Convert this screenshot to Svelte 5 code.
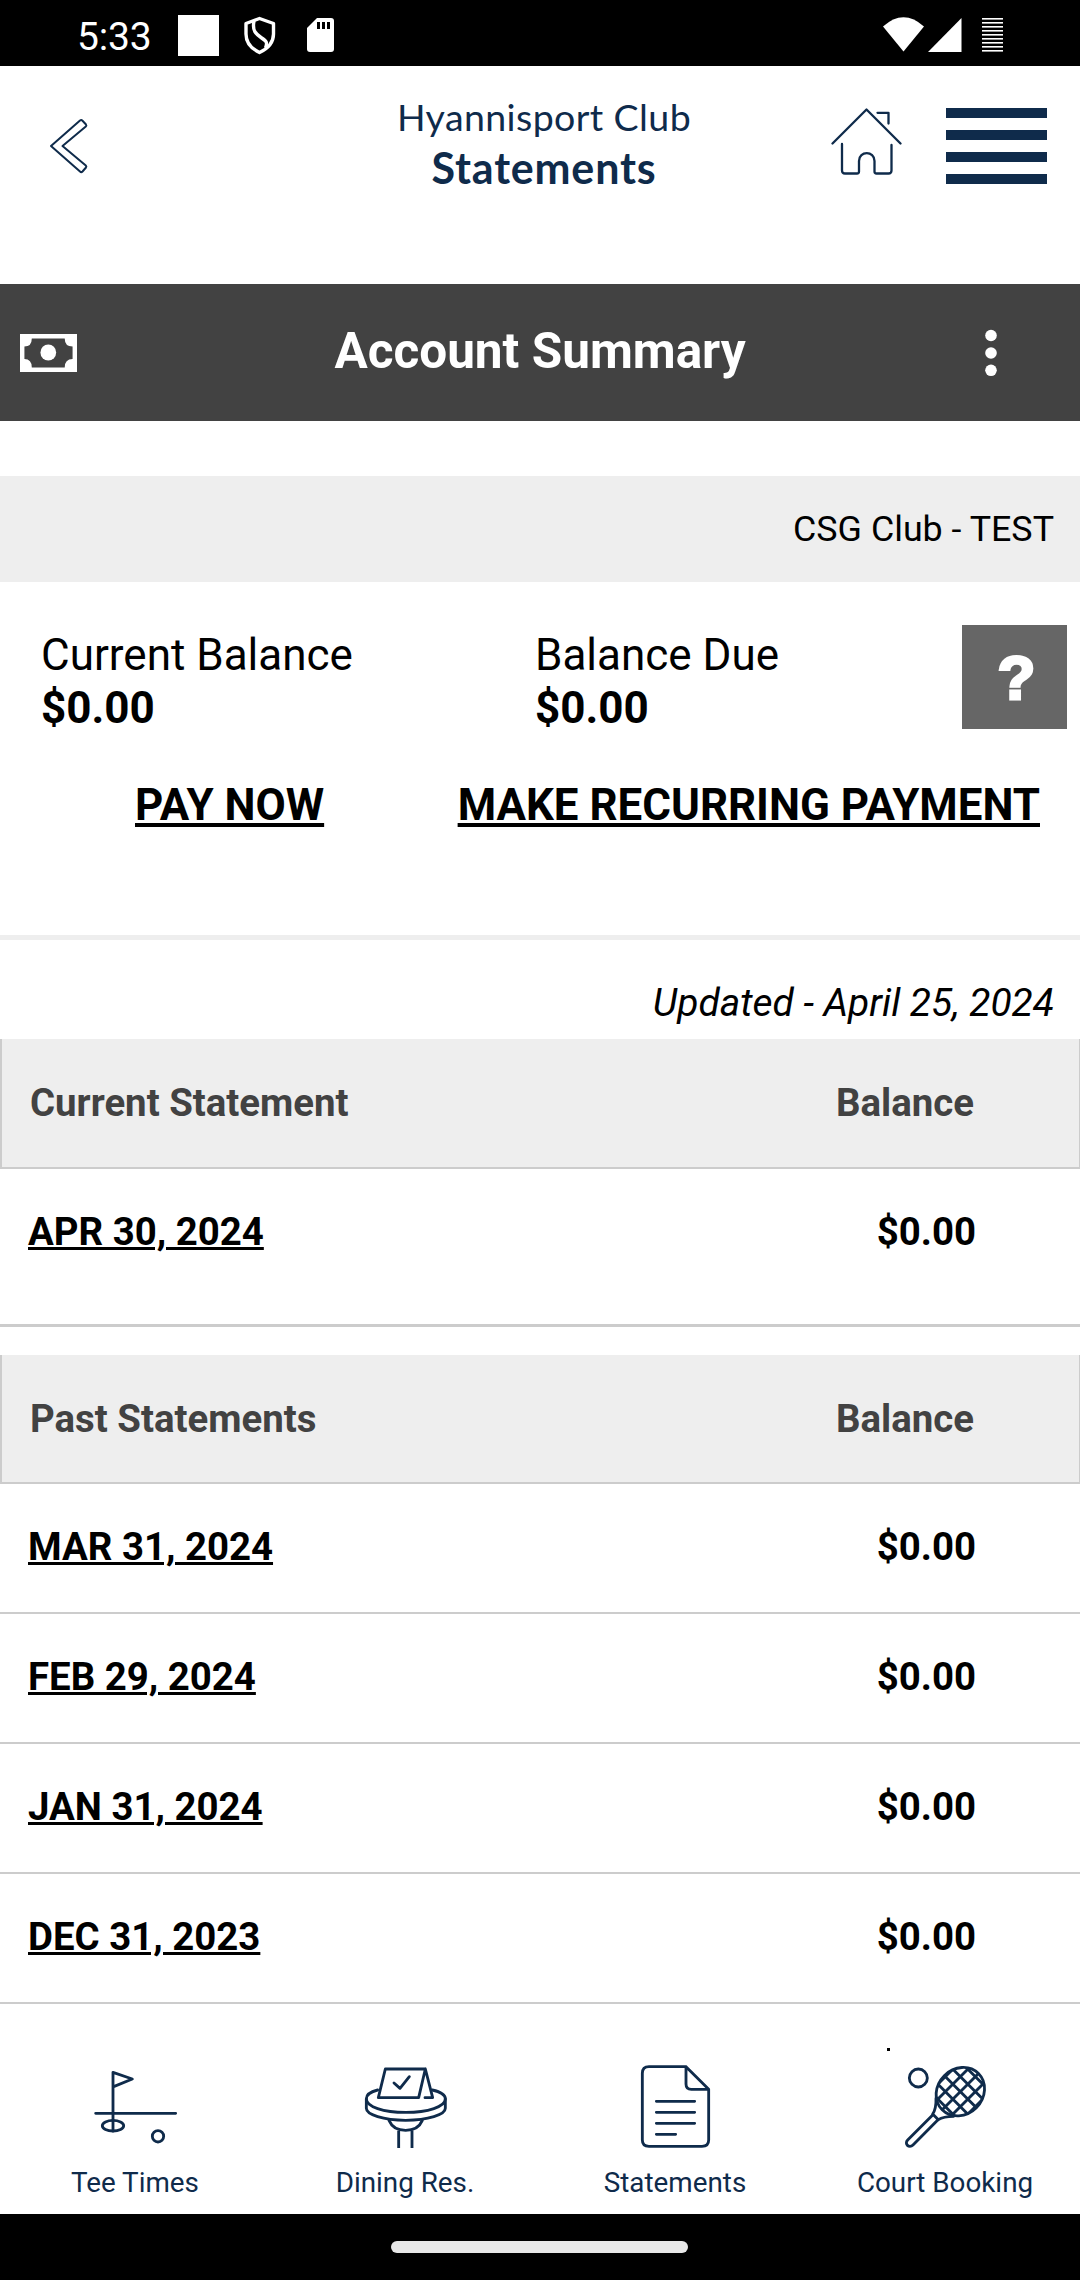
<script>
    const club = 'Hyannisport Club';
    const account = 'CSG Club - TEST';
    const updated = 'April 25, 2024';

    const balances = [
        { label: 'Current Balance', amount: '$0.00' },
        { label: 'Balance Due', amount: '$0.00' }
    ];

    const sections = [
        {
            title: 'Current Statement',
            kind: 'current',
            rows: [{ date: 'APR 30, 2024', balance: '$0.00' }]
        },
        {
            title: 'Past Statements',
            kind: 'past',
            rows: [
                { date: 'MAR 31, 2024', balance: '$0.00' },
                { date: 'FEB 29, 2024', balance: '$0.00' },
                { date: 'JAN 31, 2024', balance: '$0.00' },
                { date: 'DEC 31, 2023', balance: '$0.00' }
            ]
        }
    ];

    const tabs = [
        { icon: 'golf', label: 'Tee Times', box: '90 99 270 270' },
        { icon: 'dining', label: 'Dining Res.', box: '900 99 270 270' },
        { icon: 'statements', label: 'Statements', box: '150 99 270 270' },
        { icon: 'court', label: 'Court Booking', box: '960 99 270 270' }
    ];

    const batteryLines = [0, 1, 2, 3, 4, 5, 6, 7, 8];
    const strings = [-90, -45, 0, 45, 90];
</script>

<div class="screen">
    <div class="status-bar">
        <span class="time">5:33</span>
        <span class="square"></span>
        <svg class="shield" width="34" height="40" viewBox="243 15 34 40" fill="none" stroke="#fff" stroke-width="3.4" stroke-linejoin="round">
            <path d="M259.5 18.5L273.5 23.5V34C273.5 42 268 48.5 259.5 52.5C251 48.5 246 42 246 34V23.5Z" />
            <path d="M254 21C252 31 256 34 261 37.5C266 41 268 42 265.5 48" />
        </svg>
        <svg class="sd" width="27" height="34" viewBox="0 0 27 34">
            <path d="M10 0H24Q27 0 27 3V31Q27 34 24 34H3Q0 34 0 31V10Z" fill="#fff" />
            <path d="M10 4h3v7h-3zM15 4h3v7h-3zM20 4h3v7h-3z" fill="#000" />
        </svg>
        <span class="spacer"></span>
        <svg width="120" height="36" viewBox="883 17 120 36" fill="#fff">
            <path d="M883 26.5Q903.5 8 924 26.5L903.5 51.5Z" />
            <path d="M928 52L961.5 18V52Z" />
            {#each batteryLines as n}
                <rect x="982" y={18 + n * 4} width="21" height="1.6" />
            {/each}
        </svg>
    </div>

    <header>
        <svg class="back" width="42" height="60" viewBox="48 116 42 60" fill="none" stroke="#0f2b4b" stroke-width="2" stroke-linejoin="round">
            <path d="M51 146L80 120.5Q81.3 119.5 82.5 120.7L86 124.5Q86.8 125.5 85.8 126.5L62.5 146L85.8 165.5Q86.8 166.5 86 167.5L82.5 171.5Q81.3 172.7 80 171.5Z" />
        </svg>
        <div class="heading">
            <div class="club">{club}</div>
            <div class="page">Statements</div>
        </div>
        <div class="actions">
            <svg width="72" height="70" viewBox="830 107 72 70" fill="none" stroke="#0f2b4b" stroke-width="2.3" stroke-linecap="round" stroke-linejoin="round">
                <path d="M832.5 143.5L866.5 109.5L900.5 143.5" />
                <path d="M877.5 112.8H888.5V123.5" />
                <path d="M842 144V170.5Q842 173.5 845 173.5H857Q859 173.5 859 171.5V161C859 150.5 874.5 150.5 874.5 161V171.5Q874.5 173.5 876.5 173.5H888.5Q891.5 173.5 891.5 170.5V145" />
            </svg>
            <div class="burger">
                <span></span><span></span><span></span><span></span>
            </div>
        </div>
    </header>

    <div class="title-bar">
        <svg width="57" height="38" viewBox="0 0 58 38" preserveAspectRatio="none">
            <path d="M0 0H58V38H0Z" fill="#fff" />
            <path d="M12 4.5H45.5Q45.5 12.5 53.5 12.5V25Q45.5 25 45.5 33.5H12Q12 25 4.5 25V12.5Q12 12.5 12 4.5Z" fill="#424242" />
            <circle cx="28.8" cy="18.5" r="8" fill="#fff" />
        </svg>
        <h1>Account Summary</h1>
        <svg class="dots" width="14" height="50" viewBox="0 0 14 50" fill="#fff">
            <circle cx="7" cy="7.5" r="5.8" />
            <circle cx="7" cy="25" r="5.8" />
            <circle cx="7" cy="42.3" r="5.8" />
        </svg>
    </div>

    <div class="account">{account}</div>

    <div class="balances">
        {#each balances as item}
            <div>
                <div class="label">{item.label}</div>
                <div class="amount">{item.amount}</div>
            </div>
        {/each}
        <div class="help">?</div>
    </div>

    <div class="payments">
        <span class="link">PAY NOW</span>
        <span class="link">MAKE RECURRING PAYMENT</span>
    </div>

    <div class="updated">Updated - {updated}</div>

    {#each sections as section}
        <section class={section.kind}>
            <div class="table-head">
                <span class="name">{section.title}</span>
                <span class="head-balance">Balance</span>
            </div>
            {#each section.rows as row}
                <div class="row">
                    <span class="date">{row.date}</span>
                    <span>{row.balance}</span>
                </div>
            {/each}
        </section>
    {/each}

    <nav>
        {#each tabs as tab}
            <div class="tab">
                <svg width="90" height="90" viewBox={tab.box} fill="none" stroke="#0f2b4b" stroke-width="8.5" stroke-linecap="round" stroke-linejoin="round">
                    {#if tab.icon === 'golf'}
                        <path d="M159 303V127L217 147L161 170M107 250H347" />
                        <ellipse cx="159" cy="287" rx="32" ry="16" />
                        <circle cx="294" cy="319" r="17" />
                    {:else if tab.icon === 'dining'}
                        <path d="M976 117H1096L1076 203H955ZM1096 117L1118 203H1095M1002 159L1020 175L1048 140" />
                        <path d="M953 180C932 185 919 195 919 207C919 230 970 247 1037 247C1104 247 1156 230 1156 207C1156 195 1140 185 1117 180" />
                        <path d="M919 207V235C919 254 970 271 1037 271C1104 271 1156 254 1156 235V207" />
                        <path d="M987 271C995 290 1013 301 1037 301C1061 301 1079 290 1087 271" />
                        <path d="M1016 302V354M1056 302V354" stroke-linecap="butt" />
                    {:else if tab.icon === 'statements'}
                        <path d="M318 110H207Q187 110 187 130V330Q187 349 207 349H366Q386 349 386 330V178ZM318 110V162Q318 178 334 178H386" />
                        <path d="M229 214H344M229 247H344M229 280H344M229 313H287" />
                    {:else}
                        <circle cx="1015" cy="144" r="27" />
                        <clipPath id="head">
                            <ellipse cx="1141" cy="185" rx="78" ry="70" transform="rotate(-45 1141 185)" />
                        </clipPath>
                        <ellipse cx="1141" cy="185" rx="77" ry="68" transform="rotate(-45 1141 185)" />
                        <g clip-path="url(#head)">
                            {#each strings as s}
                                <path d="M{1041 + s} 85l200 200M{1241 + s} 85l-200 200" />
                            {/each}
                        </g>
                        <path d="M1068 205Q1069 236 1058 252L1075 269Q1090 259 1121 259" />
                        <path d="M1058 255L983 330C972 341 987 357 999 345L1074 269" />
                    {/if}
                </svg>
                <span>{tab.label}</span>
            </div>
        {/each}
        <i class="speck"></i>
    </nav>

    <div class="gesture-bar"><span></span></div>
</div>

<style>
    .screen {
        width: 1080px;
        height: 2280px;
        display: flex;
        flex-direction: column;
        overflow: hidden;
        background: #fff;
        color: #000;
        font-family: Roboto, sans-serif;
    }

    svg {
        display: block;
        flex: none;
    }

    .status-bar {
        height: 66px;
        padding: 0 77px 0 77px;
        display: flex;
        align-items: center;
        background: #000;
        color: #fff;
    }

    .time {
        width: 101px;
        padding-top: 7px;
        font-size: 39px;
        letter-spacing: -0.2px;
    }

    .square {
        width: 41px;
        height: 41px;
        margin-top: 5px;
        background: #fff;
    }

    .shield {
        margin-left: 24px;
        margin-top: 4px;
    }

    .sd {
        margin-left: 30px;
        margin-top: 4px;
    }

    .spacer {
        flex: 1;
    }

    .status-bar svg:last-child {
        margin-top: 4px;
    }

    header {
        height: 218px;
        display: grid;
        grid-template-columns: 300px 488px 1fr;
        color: #0f2b4b;
    }

    .back {
        margin: 50px 0 0 48px;
    }

    .heading {
        padding-top: 29px;
        font-family: Lato, sans-serif;
        text-align: center;
    }

    .club {
        font-size: 37.5px;
        line-height: 44px;
        letter-spacing: 0.4px;
    }

    .page {
        font-size: 43px;
        line-height: 57px;
        font-weight: 700;
        letter-spacing: 0.8px;
    }

    .actions {
        display: flex;
        padding: 41px 0 0 42px;
        gap: 44px;
    }

    .burger {
        width: 101px;
        height: 76px;
        margin-top: 1px;
        display: flex;
        flex-direction: column;
        justify-content: space-between;
    }

    .burger span {
        height: 10px;
        background: #0f2b4b;
    }

    .title-bar {
        height: 137px;
        padding: 0 82px 0 20px;
        display: flex;
        align-items: center;
        justify-content: space-between;
        background: #424242;
        color: #fff;
    }

    h1 {
        margin: 0 0 4px;
        padding-left: 19px;
        font-size: 49.5px;
        font-weight: 700;
    }

    .account {
        height: 106px;
        margin-top: 55px;
        padding-right: 26px;
        background: #eee;
        font-size: 35.8px;
        line-height: 107px;
        text-align: right;
    }

    .balances {
        display: grid;
        grid-template-columns: 494px 427px 105px;
        height: 104px;
        padding: 43px 0 0 41px;
        font-size: 44px;
        line-height: 53px;
    }

    .label {
        margin-top: 4px;
    }

    .amount {
        font-weight: 700;
    }

    .help {
        height: 104px;
        background: #666;
        color: #fff;
        font-family: "Liberation Sans", sans-serif;
        font-size: 62px;
        font-weight: 700;
        line-height: 105px;
        text-align: center;
        text-indent: 4px;
        -webkit-text-stroke: 3px #fff;
    }

    .payments {
        display: flex;
        justify-content: space-between;
        height: 156px;
        padding: 50px 40px 0 135px;
        border-bottom: 5px solid #eee;
        font-size: 43.9px;
        line-height: 52px;
        font-weight: 700;
    }

    .link {
        text-decoration: underline;
        text-decoration-thickness: 4px;
        text-underline-offset: 3px;
    }

    .updated {
        padding: 40px 26px 13px 0;
        font-size: 38.9px;
        line-height: 46px;
        font-style: italic;
        text-align: right;
    }

    .table-head {
        height: 130px;
        box-sizing: border-box;
        padding: 0 105px 0 28px;
        display: flex;
        justify-content: space-between;
        border: 2px solid #ccc;
        border-width: 0 1px 2px 2px;
        background: #eee;
        color: #424242;
        font-size: 38.4px;
        line-height: 128px;
        font-weight: 700;
    }

    .row {
        height: 130px;
        box-sizing: border-box;
        padding: 0 104px 0 28px;
        display: flex;
        justify-content: space-between;
        border-bottom: 2px solid #ccc;
        font-size: 38.4px;
        line-height: 126px;
        font-weight: 700;
    }

    .date {
        text-decoration: underline;
        text-decoration-thickness: 3px;
        text-underline-offset: 2px;
    }

    .current .row {
        height: 158px;
        border-bottom-width: 3px;
    }

    .past {
        margin-top: 28px;
    }

    .past .table-head {
        height: 129px;
        line-height: 127px;
    }

    nav {
        position: relative;
        flex: 1;
        display: grid;
        grid-template-columns: repeat(4, 1fr);
        padding-top: 59px;
        color: #0f2b4b;
    }

    .tab {
        display: flex;
        flex-direction: column;
        align-items: center;
        gap: 12px;
        font-size: 27.8px;
        line-height: 36px;
    }

    .speck {
        position: absolute;
        left: 887px;
        top: 44px;
        width: 3px;
        height: 3px;
        background: #000;
    }

    .gesture-bar {
        height: 66px;
        display: flex;
        justify-content: center;
        align-items: center;
        background: #000;
    }

    .gesture-bar span {
        width: 297px;
        height: 12px;
        margin-right: 1px;
        border-radius: 6px;
        background: #e8e8e8;
    }
</style>
